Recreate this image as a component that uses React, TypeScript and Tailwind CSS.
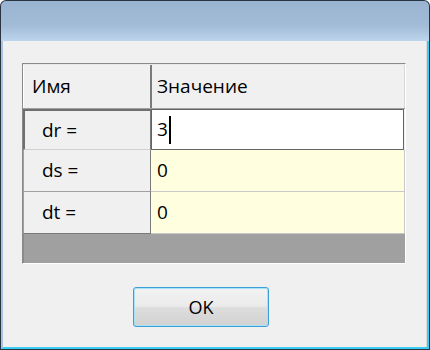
export default function App() {
  return (
    <div
      className="w-[430px] h-[350px] bg-[#2a3440] rounded-t-[6px] p-px flex flex-col text-black"
      style={{ fontFamily: '"Open Sans", "Noto Sans", sans-serif' }}
    >
      {/* Title bar */}
      <div className="h-[40px] shrink-0 rounded-t-[5px] bg-[linear-gradient(to_bottom,#99b4d1,#a2bbd7_62%,#bdd4ed)]" />

      {/* Window body with frame */}
      <div className="flex-1 flex border-l-2 border-l-[#a9c4e2] border-r-2 border-r-[#3ccbf3] border-b-2 border-b-[#3ccbf3]">
        <div className="flex-1 flex flex-col bg-[#f0f0f0] border-r border-r-[#dadada]">
          {/* Grid */}
          <div className="ml-[19px] mt-[22px] w-[384px] h-[201px] flex flex-col border border-t-[#8a8a8a] border-l-[#8a8a8a] border-r-[#ffffff] border-b-[#ffffff]">
            {/* Header row */}
            <div className="h-[45px] flex border-t border-t-[#e8e8e8] border-b border-b-[#a0a0a0] text-[19px]">
              <div className="w-[129px] flex items-center pl-[8px] border-r-2 border-r-[#7a7a7a] border-l border-l-[#ffffff]">
                Имя
              </div>
              <div className="flex-1 flex items-center pl-[5px] border-r border-r-[#d8d8d8]">Значение</div>
            </div>

            {/* dr row */}
            <div className="h-[41px] flex text-[19px]">
              <div className="w-[128px] flex items-center pl-[17px] border-l-2 border-l-[#6f6f6f] border-t-2 border-t-[#6f6f6f] border-b border-b-[#d0d0d0] border-r border-r-[#7a7a7a]">
                dr =
              </div>
              <div className="flex-1 flex items-center pl-[5px] bg-white border border-[#646464] mr-[1px]">
                <span>3</span>
                <span className="w-[2px] h-[28px] bg-black ml-[1px]" />
              </div>
            </div>

            {/* ds row */}
            <div className="h-[42px] flex text-[19px]">
              <div className="w-[128px] flex items-center pl-[18px] border-l border-l-[#a0a0a0] border-b border-b-[#a0a0a0] border-r border-r-[#7a7a7a]">
                ds =
              </div>
              <div className="flex-1 flex items-center pl-[6px] bg-[#ffffe0] border-b border-b-[#c8c8c8] border-r border-r-[#c8c8c8]">
                0
              </div>
            </div>

            {/* dt row */}
            <div className="h-[42px] flex text-[19px]">
              <div className="w-[128px] flex items-center pl-[18px] border-l border-l-[#a0a0a0] border-b border-b-[#7a7a7a] border-r border-r-[#7a7a7a]">
                dt =
              </div>
              <div className="flex-1 flex items-center pl-[6px] bg-[#ffffe0] border-b border-b-[#c8c8c8] border-r border-r-[#c8c8c8]">
                0
              </div>
            </div>

            {/* empty grid background */}
            <div className="flex-1 bg-[#a0a0a0] border-l border-l-[#8a8a8a]" />
          </div>

          {/* OK button */}
          <div className="ml-[130px] mt-[23px]">
            <button className="w-[136px] h-[40px] rounded-[3px] border border-[#3c9fd8] bg-[linear-gradient(to_bottom,#f2f2f2,#ebebeb_48%,#dddddd_52%,#d2d2d2)] text-[18px] flex items-center justify-center shadow-[inset_0_0_0_1px_#a6e3f7]">
              OK
            </button>
          </div>
        </div>
      </div>
    </div>
  );
}
